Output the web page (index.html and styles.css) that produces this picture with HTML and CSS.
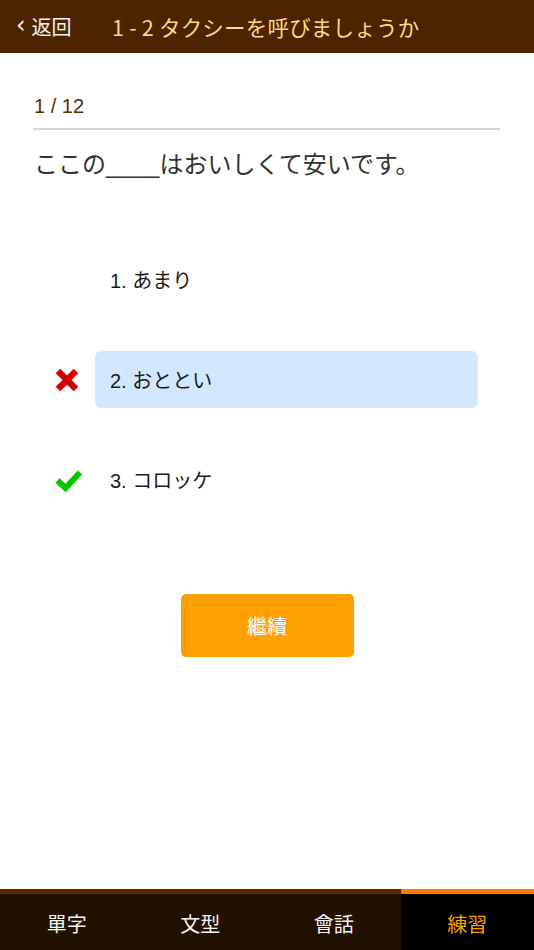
FILE: index.html
```html
<!DOCTYPE html>
<html lang="ja">
<head>
<meta charset="utf-8">
<title>練習</title>
<link rel="stylesheet" href="styles.css">
</head>
<body>
<div class="app">
  <header class="topbar">
    <div class="back"><span class="chev">&lsaquo;</span><span>返回</span></div>
    <div class="title">1 - 2 タクシーを呼びましょうか</div>
  </header>
  <main class="content">
    <div class="counter">1 / 12</div>
    <div class="rule"></div>
    <div class="question">ここの____はおいしくて安いです。</div>
    <ul class="options">
      <li class="option">
        <span class="mark"></span>
        <span class="choice">1. あまり</span>
      </li>
      <li class="option">
        <span class="mark">
          <svg width="24" height="24" viewBox="0 0 24 24"><path d="M3 3 L21 21 M21 3 L3 21" stroke="#d40000" stroke-width="6.5" stroke-linecap="butt" fill="none"/></svg>
        </span>
        <span class="choice selected">2. おととい</span>
      </li>
      <li class="option">
        <span class="mark">
          <svg width="28" height="24" viewBox="0 0 28 24"><path d="M2.5 12.5 L10.5 20 L25 4.5" stroke="#00c800" stroke-width="6" stroke-linecap="butt" stroke-linejoin="miter" fill="none"/></svg>
        </span>
        <span class="choice">3. コロッケ</span>
      </li>
    </ul>
    <div class="actions">
      <button class="continue">繼續</button>
    </div>
  </main>
  <nav class="tabbar">
    <div class="tab">單字</div>
    <div class="tab">文型</div>
    <div class="tab">會話</div>
    <div class="tab active">練習</div>
  </nav>
</div>
</body>
</html>
```

FILE: styles.css
```css
* { box-sizing: border-box; }
html, body { margin: 0; padding: 0; background: #fff; }
body {
  font-family: "Liberation Sans", "Noto Sans CJK JP", sans-serif;
  color: #222;
}
.app {
  height: 950px;
  display: flex;
  flex-direction: column;
}
.topbar {
  height: 53px;
  background: #4e2400;
  display: flex;
  align-items: center;
  padding-left: 16px;
  flex-shrink: 0;
}
.back {
  display: flex;
  align-items: center;
  color: #f2f2f2;
  font-family: "Noto Sans CJK JP", sans-serif;
  font-size: 20px;
  width: 96px;
}
.chev {
  font-family: "DejaVu Sans", sans-serif;
  font-size: 24px;
  margin-right: 6px;
  position: relative;
  top: -2px;
}
.title {
  color: #f9d98a;
  font-family: "Noto Sans CJK JP", sans-serif;
  font-size: 21.5px;
  letter-spacing: 0.2px;
}
.content {
  flex: 1;
  padding: 0 34px 0 33px;
  display: flex;
  flex-direction: column;
}
.counter {
  margin-top: 39px;
  font-size: 20px;
  line-height: 28px;
  color: #5a2b00;
  padding-left: 1px;
}
.rule {
  margin-top: 8px;
  height: 2px;
  background: #d4d4d4;
}
.question {
  margin-top: 20px;
  font-family: "Liberation Sans", "Noto Sans CJK TC", sans-serif;
  font-size: 24px;
  line-height: 30px;
  color: #333;
  padding-left: 1px;
}
.options {
  list-style: none;
  margin: 71px 0 0;
  padding: 0 22px 0 0;
  display: flex;
  flex-direction: column;
  gap: 43px;
}
.option {
  display: flex;
  align-items: center;
  height: 57px;
}
.mark {
  width: 62px;
  padding-left: 22px;
  display: flex;
  align-items: center;
  flex-shrink: 0;
}
.mark svg { display: block; }
.choice {
  flex: 1;
  height: 57px;
  display: flex;
  align-items: center;
  padding-left: 15px;
  font-size: 20px;
  color: #1a1a1a;
  border-radius: 6px;
}
.choice.selected { background: #d1e7fd; }
.actions {
  display: flex;
  justify-content: center;
  margin-top: 86px;
  padding-left: 1px;
}
.continue {
  width: 173px;
  height: 63px;
  border: none;
  border-radius: 5px;
  background: #ff9f00;
  color: #fff;
  font-family: "Noto Sans CJK TC", sans-serif;
  font-size: 20px;
  padding: 0;
}
.tabbar {
  height: 61px;
  display: flex;
  background: #221000;
  flex-shrink: 0;
}
.tab {
  flex: 1;
  display: flex;
  align-items: center;
  justify-content: center;
  border-top: 5px solid #582800;
  color: #f4f4f4;
  font-family: "Noto Sans CJK TC", sans-serif;
  font-size: 20px;
  padding-top: 2px;
}
.tab.active {
  background: #000;
  border-top-color: #ff7b00;
  color: #f5a200;
}
```
